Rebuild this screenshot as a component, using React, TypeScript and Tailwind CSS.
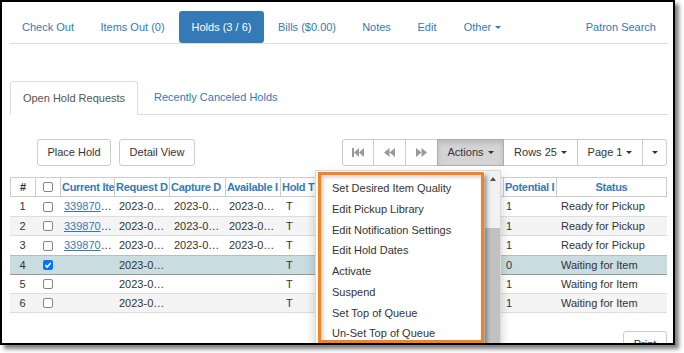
import React from 'react';

const Caret = () => (
  <span className="inline-block w-0 h-0 ml-[4px] border-t-[3px] border-t-current border-x-[3px] border-x-transparent" />
);

const Check = ({ on }: { on?: boolean }) =>
  on ? (
    <span className="w-[10px] h-[10px] rounded-[2px] bg-[#0075ff] flex items-center justify-center">
      <svg viewBox="0 0 10 10" className="w-[10px] h-[10px]">
        <path d="M2.3 5.1 4.2 7 7.7 2.9" fill="none" stroke="white" strokeWidth="1.6" />
      </svg>
    </span>
  ) : (
    <span className="w-[10px] h-[10px] rounded-[2px] border border-[#858585] bg-white" />
  );

const FastBack = () => (
  <svg viewBox="0 0 12 9" className="w-[12px] h-[9px] fill-[#999]">
    <rect x="0" y="0" width="2" height="9" />
    <path d="M2 4.5 7 0v9z" />
    <path d="M7 4.5 12 0v9z" />
  </svg>
);

const Back = () => (
  <svg viewBox="0 0 11 9" className="w-[11px] h-[9px] fill-[#999]">
    <path d="M0 4.5 5.5 0v9z" />
    <path d="M5.5 4.5 11 0v9z" />
  </svg>
);

const Forward = () => (
  <svg viewBox="0 0 11 9" className="w-[11px] h-[9px] fill-[#999]">
    <path d="M11 4.5 5.5 0v9z" />
    <path d="M5.5 4.5 0 0v9z" />
  </svg>
);

const rows = [
  { n: 1, on: false, link: true, full: true, pot: '1', status: 'Ready for Pickup', bg: 'bg-white', h: 'h-[20px]', bd: 'border-[#ddd]' },
  { n: 2, on: false, link: true, full: true, pot: '1', status: 'Ready for Pickup', bg: 'bg-[#f4f4f4]', h: 'h-[19px]', bd: 'border-[#ddd]' },
  { n: 3, on: false, link: true, full: true, pot: '1', status: 'Ready for Pickup', bg: 'bg-white', h: 'h-[20px]', bd: 'border-[#bbb]' },
  { n: 4, on: true, link: false, full: false, pot: '0', status: 'Waiting for Item', bg: 'bg-[#c9dcdf]', h: 'h-[19px]', bd: 'border-[#999]' },
  { n: 5, on: false, link: false, full: false, pot: '1', status: 'Waiting for Item', bg: 'bg-white', h: 'h-[19px]', bd: 'border-[#ddd]' },
  { n: 6, on: false, link: false, full: false, pot: '1', status: 'Waiting for Item', bg: 'bg-[#f4f4f4]', h: 'h-[19px]', bd: 'border-[#ddd]' },
];

const menu = [
  'Set Desired Item Quality',
  'Edit Pickup Library',
  'Edit Notification Settings',
  'Edit Hold Dates',
  'Activate',
  'Suspend',
  'Set Top of Queue',
  'Un-Set Top of Queue',
];

const cols = 'grid grid-cols-[25px_25px_54px_55px_56px_55px_55px_56px_56px_56px_53px_111px]';

// headers are cut by their narrow columns; columns 8-10 sit under the open dropdown
const headers = ['Current Ite', 'Request D', 'Capture D', 'Available I', 'Hold T', '', '', '', 'Potential I'];

export default function App() {
  return (
    <div className="w-[684px] h-[353px] bg-white font-['Liberation_Sans',Arial,sans-serif] text-[11px] text-[#333]">
      <div className="relative w-[675px] h-[345px] border-2 border-black bg-white overflow-hidden shadow-[4px_4px_4px_rgba(0,0,0,0.5)]">
        <div className="pl-[8px]">
          {/* patron nav */}
          <div className="mt-[9px] w-[658px] flex border-b border-[#ddd] text-[#337ab7]">
            <div className="w-[76px] h-[32px] flex items-center justify-center">Check Out</div>
            <div className="w-[89px] ml-[2px] h-[32px] flex items-center justify-center">Items Out (0)</div>
            <div className="w-[85px] ml-[2px] h-[32px] flex items-center justify-center rounded-[3px] bg-[#337ab7] text-white">Holds (3 / 6)</div>
            <div className="w-[82px] ml-[2px] h-[32px] flex items-center justify-center">Bills ($0.00)</div>
            <div className="w-[53px] ml-[2px] h-[32px] flex items-center justify-center">Notes</div>
            <div className="w-[44px] ml-[2px] h-[32px] flex items-center justify-center">Edit</div>
            <div className="w-[63px] ml-[2px] h-[32px] flex items-center justify-center">
              Other
              <Caret />
            </div>
            <div className="ml-auto pr-[12px] h-[32px] flex items-center">Patron Search</div>
          </div>

          {/* hold tabs */}
          <div className="mt-[37px] w-[658px] flex border-b border-[#ddd]">
            <div className="w-[128px] h-[34px] -mb-px flex items-center justify-center rounded-t-[3px] border border-[#ddd] border-b-white bg-white text-[#555]">
              Open Hold Requests
            </div>
            <div className="ml-[2px] h-[33px] px-[14px] flex items-center text-[#337ab7]">Recently Canceled Holds</div>
          </div>

          {/* toolbar */}
          <div className="mt-[24px] w-[657px] flex justify-between">
            <div className="pl-[27px] flex gap-[8px]">
              <button className="w-[74px] h-[27px] rounded-[3px] border border-[#ccc] bg-white">Place Hold</button>
              <button className="w-[76px] h-[27px] rounded-[3px] border border-[#ccc] bg-white">Detail View</button>
            </div>
            <div className="flex h-[27px]">
              <button className="w-[32px] flex items-center justify-center rounded-l-[3px] border border-[#ccc] bg-white"><FastBack /></button>
              <button className="w-[33px] -ml-px flex items-center justify-center border border-[#ccc] bg-white"><Back /></button>
              <button className="w-[33px] -ml-px flex items-center justify-center border border-[#ccc] bg-white"><Forward /></button>
              <button className="relative w-[67px] -ml-px flex items-center justify-center border border-[#adadad] bg-[#d4d4d4] shadow-[inset_0_3px_5px_rgba(0,0,0,0.13)]">
                Actions
                <Caret />
              </button>
              <button className="w-[75px] -ml-px flex items-center justify-center border border-[#ccc] bg-white">
                Rows 25
                <Caret />
              </button>
              <button className="w-[66px] -ml-px flex items-center justify-center border border-[#ccc] bg-white">
                Page 1
                <Caret />
              </button>
              <button className="w-[25px] -ml-px flex items-center justify-center rounded-r-[3px] border border-[#ccc] bg-white">
                <span className="inline-block w-0 h-0 border-t-[3px] border-t-current border-x-[3px] border-x-transparent" />
              </button>
            </div>
          </div>

          {/* grid */}
          <div className="mt-[11px] w-[657px]">
            <div className={`${cols} h-[20px] border-y border-[#ccc] text-[#337ab7] font-bold tracking-[-0.3px]`}>
              <div className="border-l border-[#ccc] flex items-center justify-center text-[#333]">#</div>
              <div className="border-l border-[#ccc] flex items-center justify-center">
                <Check />
              </div>
              {headers.map((h, i) => (
                <div key={i} className="border-l border-[#ccc] pl-px flex items-center overflow-hidden whitespace-nowrap">{h}</div>
              ))}
              <div className="border-x border-[#ccc] flex items-center justify-center">Status</div>
            </div>
            {rows.map((r) => (
              <div key={r.n} className={`${cols} ${r.h} ${r.bg} border-b ${r.bd}`}>
                <div className="flex items-center justify-center">{r.n}</div>
                <div className="flex items-center justify-center">
                  <Check on={r.on} />
                </div>
                <div className="pl-[4px] flex items-center">
                  {r.link && (
                    <>
                      <span className="text-[#337ab7] underline">339870</span>…
                    </>
                  )}
                </div>
                <div className="pl-[5px] flex items-center">2023-0…</div>
                <div className="pl-[5px] flex items-center">{r.full ? '2023-0…' : ''}</div>
                <div className="pl-[4px] flex items-center">{r.full ? '2023-0…' : ''}</div>
                <div className="pl-[6px] flex items-center">T</div>
                <div />
                <div />
                <div />
                <div className="pl-[3px] flex items-center">{r.pot}</div>
                <div className="pl-[5px] flex items-center">{r.status}</div>
              </div>
            ))}
            <div className="mt-[18px] flex justify-end">
              <button className="w-[44px] h-[27px] rounded-[3px] border border-[#ccc] bg-white">Print</button>
            </div>
          </div>
        </div>

        {/* actions dropdown */}
        <div className="absolute left-[313px] top-[168px] w-[186px] h-[190px] flex bg-white border border-black/15 shadow-[0_5px_10px_rgba(0,0,0,0.2)]">
          <div className="flex-1 pt-[7px]">
            {menu.map((m) => (
              <div key={m} className="h-[20.75px] pl-[16px] flex items-center whitespace-nowrap">{m}</div>
            ))}
          </div>
          <div className="w-[15px] flex flex-col bg-[#f1f1f1]">
            <div className="h-[15px] flex items-center justify-center">
              <span className="inline-block w-0 h-0 border-b-[4px] border-b-[#505050] border-x-[3.5px] border-x-transparent" />
            </div>
            <div className="h-[42px]" />
            <div className="flex-1 bg-[#c1c1c1]" />
          </div>
        </div>

        {/* highlight */}
        <div className="absolute left-[316px] top-[170px] w-[166px] h-[171px] border-[3px] border-[#f5821f] shadow-[3px_3px_4px_rgba(0,0,0,0.35),inset_2px_2px_4px_rgba(0,0,0,0.2)]" />
      </div>
    </div>
  );
}
